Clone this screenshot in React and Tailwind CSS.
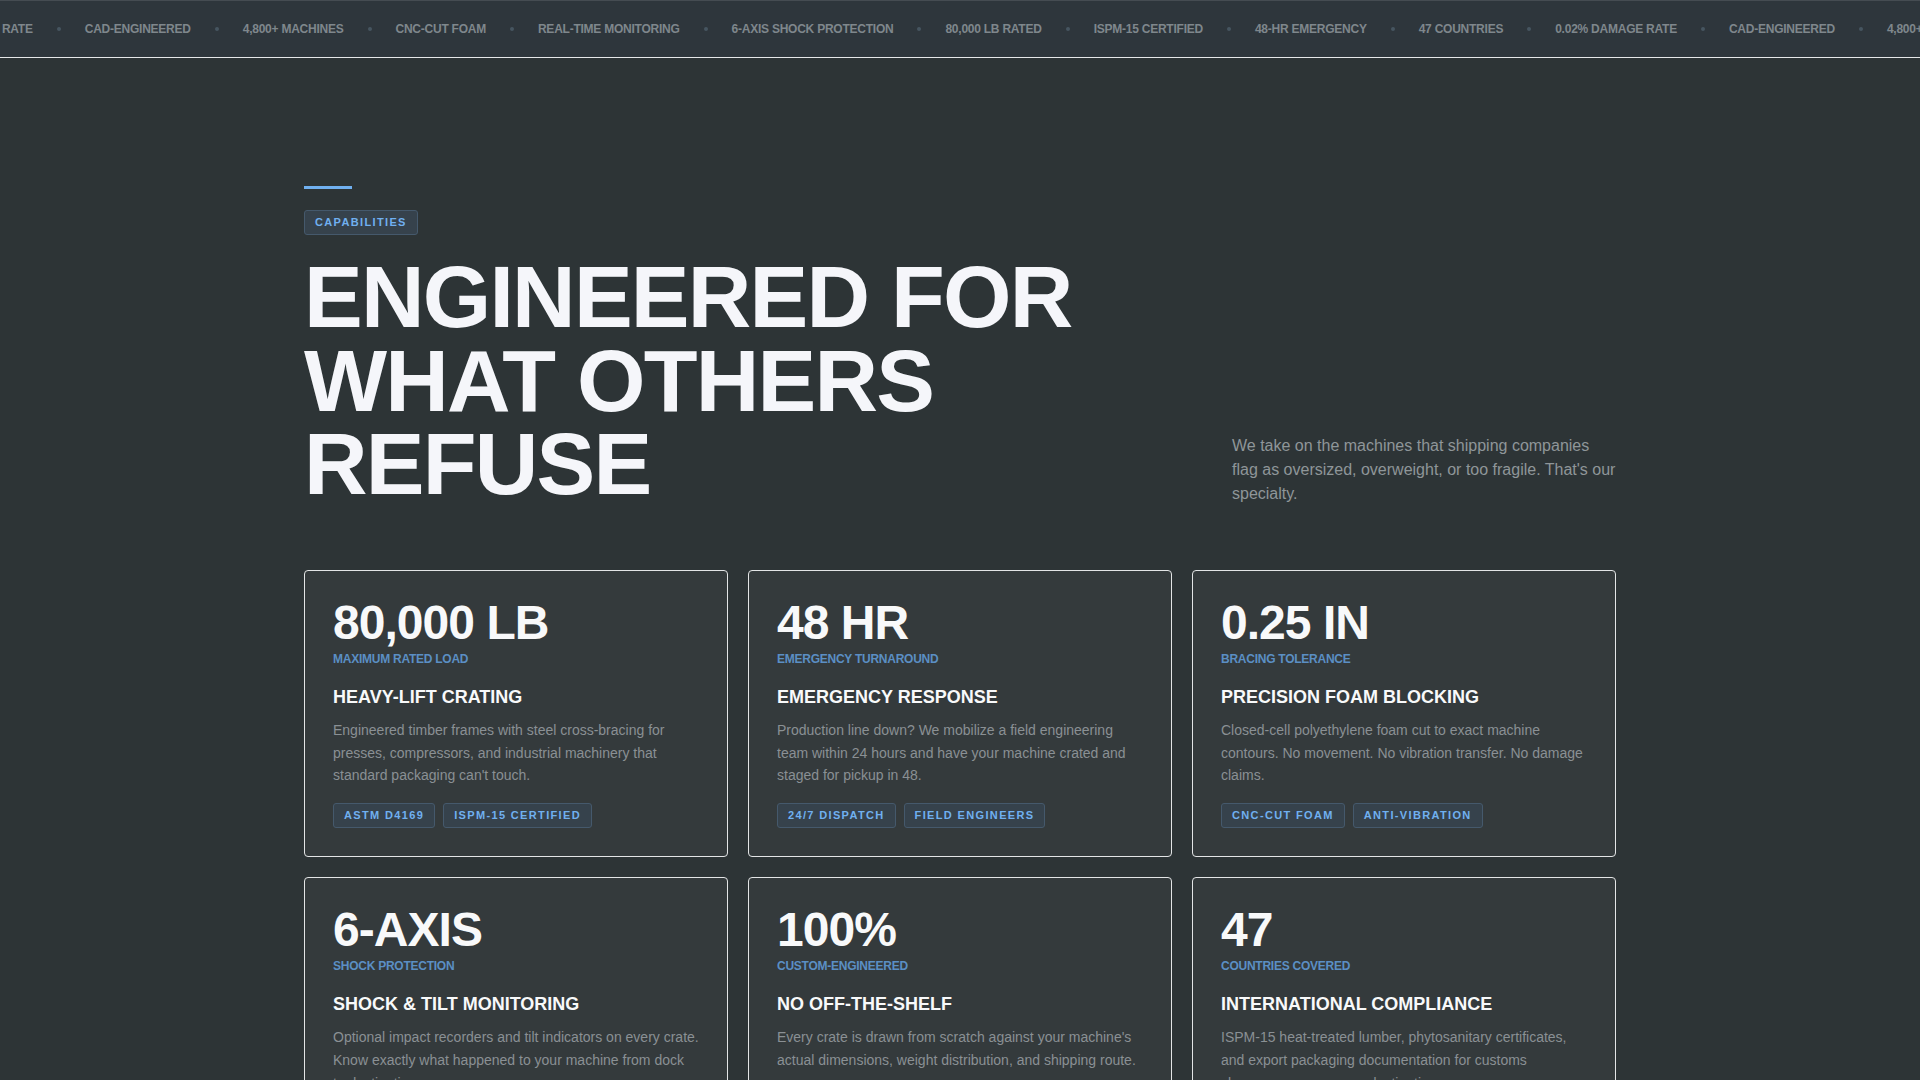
import React from 'react';

const tickerItems = [
  '0.02% DAMAGE RATE',
  'CAD-ENGINEERED',
  '4,800+ MACHINES',
  'CNC-CUT FOAM',
  'REAL-TIME MONITORING',
  '6-AXIS SHOCK PROTECTION',
  '80,000 LB RATED',
  'ISPM-15 CERTIFIED',
  '48-HR EMERGENCY',
  '47 COUNTRIES',
  '0.02% DAMAGE RATE',
  'CAD-ENGINEERED',
  '4,800+ MACHINES',
];

const cards = [
  {
    stat: '80,000 LB',
    label: 'MAXIMUM RATED LOAD',
    title: 'HEAVY-LIFT CRATING',
    text: "Engineered timber frames with steel cross-bracing for presses, compressors, and industrial machinery that standard packaging can't touch.",
    tags: ['ASTM D4169', 'ISPM-15 CERTIFIED'],
  },
  {
    stat: '48 HR',
    label: 'EMERGENCY TURNAROUND',
    title: 'EMERGENCY RESPONSE',
    text: 'Production line down? We mobilize a field engineering team within 24 hours and have your machine crated and staged for pickup in 48.',
    tags: ['24/7 DISPATCH', 'FIELD ENGINEERS'],
  },
  {
    stat: '0.25 IN',
    label: 'BRACING TOLERANCE',
    title: 'PRECISION FOAM BLOCKING',
    text: 'Closed-cell polyethylene foam cut to exact machine contours. No movement. No vibration transfer. No damage claims.',
    tags: ['CNC-CUT FOAM', 'ANTI-VIBRATION'],
  },
  {
    stat: '6-AXIS',
    label: 'SHOCK PROTECTION',
    title: 'SHOCK & TILT MONITORING',
    text: 'Optional impact recorders and tilt indicators on every crate. Know exactly what happened to your machine from dock to destination.',
    tags: ['REAL-TIME DATA', 'GPS TRACKING'],
  },
  {
    stat: '100%',
    label: 'CUSTOM-ENGINEERED',
    title: 'NO OFF-THE-SHELF',
    text: "Every crate is drawn from scratch against your machine's actual dimensions, weight distribution, and shipping route.",
    tags: ['CAD DRAWINGS', 'FEA TESTED'],
  },
  {
    stat: '47',
    label: 'COUNTRIES COVERED',
    title: 'INTERNATIONAL COMPLIANCE',
    text: 'ISPM-15 heat-treated lumber, phytosanitary certificates, and export packaging documentation for customs clearance across every destination.',
    tags: ['ISPM-15', 'EXPORT DOCS'],
  },
];

function Tag({ children }) {
  return (
    <span className="border border-[#45596c] bg-[#36424c] rounded-[3px] px-[10px] h-[25px] flex items-center text-[11px] font-bold tracking-[1.35px] text-[#70b0f0]">
      {children}
    </span>
  );
}

function TickerItem({ children }) {
  return (
    <>
      <span className="text-[12px] font-semibold tracking-[-0.24px] text-[#7f878c] whitespace-nowrap">{children}</span>
      <span className="w-1 h-1 rounded-full bg-[#465560] mx-[24px] shrink-0"></span>
    </>
  );
}

function Card({ card }) {
  return (
    <div className="bg-[#343a3c] border border-[#e3e5e6] rounded-[4px] px-[28px] pt-[28px] pb-[28px]">
      <div className="text-[48px] leading-none font-bold tracking-[-0.02em] text-[#f8f9fa]">{card.stat}</div>
      <div className="text-[12px] font-semibold tracking-[-0.25px] text-[#5b8fc4] mt-[3px]">{card.label}</div>
      <h3 className="text-[18px] font-bold text-[#f8f9fa] mt-[16px] leading-[27px]">{card.title}</h3>
      <p className="text-[14px] leading-relaxed text-[#8a9094] mt-[8px]">{card.text}</p>
      <div className="flex gap-2 mt-[16px]">
        {card.tags.map((tag) => (
          <Tag key={tag}>{tag}</Tag>
        ))}
      </div>
    </div>
  );
}

export default function App() {
  return (
    <div className="h-screen overflow-hidden bg-[#2d3436] font-['Liberation_Sans',Arial,sans-serif]">
      <div className="h-[58px] bg-[#2e363c] border-t border-t-[#454c52] border-b border-b-[#e6e8e9] overflow-hidden flex items-center">
        <div className="flex items-center -ml-[89px]">
          {tickerItems.map((item, i) => (
            <TickerItem key={i}>{item}</TickerItem>
          ))}
        </div>
      </div>

      <section className="w-[1312px] mx-auto pt-[128px]">
        <div className="w-12 h-[3px] bg-[#70b0f0] mb-[21px]"></div>
        <span className="flex w-fit items-center h-[25px] px-[10px] border border-[#45596c] bg-[#36424c] rounded-[3px] text-[11px] font-bold tracking-[1.35px] text-[#70b0f0]">
          CAPABILITIES
        </span>
        <div className="flex justify-between items-end mt-[20px] mb-[64px]">
          <h2 className="text-[88px] leading-[0.95] font-bold tracking-[-0.02em] text-[#f5f6fa] w-[900px]">
            ENGINEERED FOR WHAT OTHERS REFUSE
          </h2>
          <p className="w-[384px] text-[16px] leading-[24px] text-[#8f9699]">
            We take on the machines that shipping companies flag as oversized, overweight, or too fragile. That's our specialty.
          </p>
        </div>
        <div className="grid grid-cols-3 gap-5">
          {cards.map((card) => (
            <Card key={card.title} card={card} />
          ))}
        </div>
      </section>
    </div>
  );
}
